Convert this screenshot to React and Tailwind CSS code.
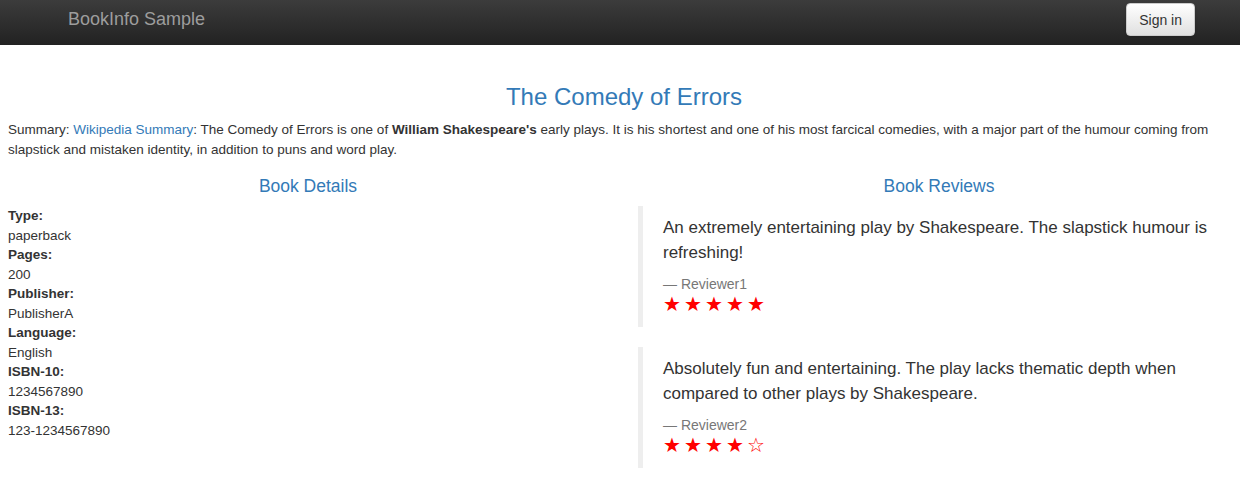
import React from "react";

const details = [
  ["Type:", "paperback"],
  ["Pages:", "200"],
  ["Publisher:", "PublisherA"],
  ["Language:", "English"],
  ["ISBN-10:", "1234567890"],
  ["ISBN-13:", "123-1234567890"],
];

const reviews = [
  {
    text: "An extremely entertaining play by Shakespeare. The slapstick humour is refreshing!",
    reviewer: "Reviewer1",
    stars: 5,
  },
  {
    text: "Absolutely fun and entertaining. The play lacks thematic depth when compared to other plays by Shakespeare.",
    reviewer: "Reviewer2",
    stars: 4,
  },
];

const Stars = ({ count }) => (
  <div className="text-[20px] leading-[20px] text-[#ff0000]">
    {[0, 1, 2, 3, 4].map((i) => (
      <span key={i} className="inline-block w-[21px]">
        {i < count ? "★" : "☆"}
      </span>
    ))}
  </div>
);

export default function App() {
  return (
    <div className="min-h-screen bg-white text-[#333] text-[14px] leading-[20px] font-['Liberation_Sans',Arial,sans-serif]">
      <nav className="h-[45px] bg-gradient-to-b from-[#3c3c3c] to-[#222] flex items-start justify-between pl-[68px] pr-[45px]">
        <span className="mt-[9px] text-[18px] leading-[20px] text-[#9d9d9d]">BookInfo Sample</span>
        <button className="mt-[3px] h-[33px] px-[12px] rounded-[4px] border border-[#ccc] bg-gradient-to-b from-white to-[#e0e0e0] text-[14px] text-[#333] shadow-sm">
          Sign in
        </button>
      </nav>

      <div className="pl-[8px]">
        <h3 className="mt-[38px] mb-[9px] text-center text-[24px] leading-[28px] text-[#337ab7]">
          The Comedy of Errors
        </h3>
        <p className="mb-[16px] pr-[8px] text-[13.5px]">
          Summary: <a className="text-[#337ab7]">Wikipedia Summary</a>: The Comedy of Errors is one of{" "}
          <b>William Shakespeare's</b> early plays. It is his shortest and one of his most farcical comedies, with a
          major part of the humour coming from slapstick and mistaken identity, in addition to puns and word play.
        </p>

        <div className="grid grid-cols-[600px_1fr] gap-[30px]">
          <div>
            <h4 className="text-center text-[17.5px] leading-[20px] text-[#337ab7] mb-[10px]">Book Details</h4>
            <dl className="leading-[19.5px] text-[13.5px]">
              {details.map(([k, v]) => (
                <React.Fragment key={k}>
                  <dt className="font-bold">{k}</dt>
                  <dd>{v}</dd>
                </React.Fragment>
              ))}
            </dl>
          </div>

          <div>
            <h4 className="text-center text-[17.5px] leading-[20px] text-[#337ab7] mb-[10px]">Book Reviews</h4>
            {reviews.map((r) => (
              <blockquote
                key={r.reviewer}
                className="border-l-[5px] border-[#eee] pl-[20px] pr-[10px] pt-[9px] pb-[13px] mb-[20px]"
              >
                <p className="text-[17px] leading-[25px] mb-[9px]">{r.text}</p>
                <footer className="text-[14px] leading-[20px] text-[#777]">— {r.reviewer}</footer>
                <Stars count={r.stars} />
              </blockquote>
            ))}
          </div>
        </div>
      </div>
    </div>
  );
}
